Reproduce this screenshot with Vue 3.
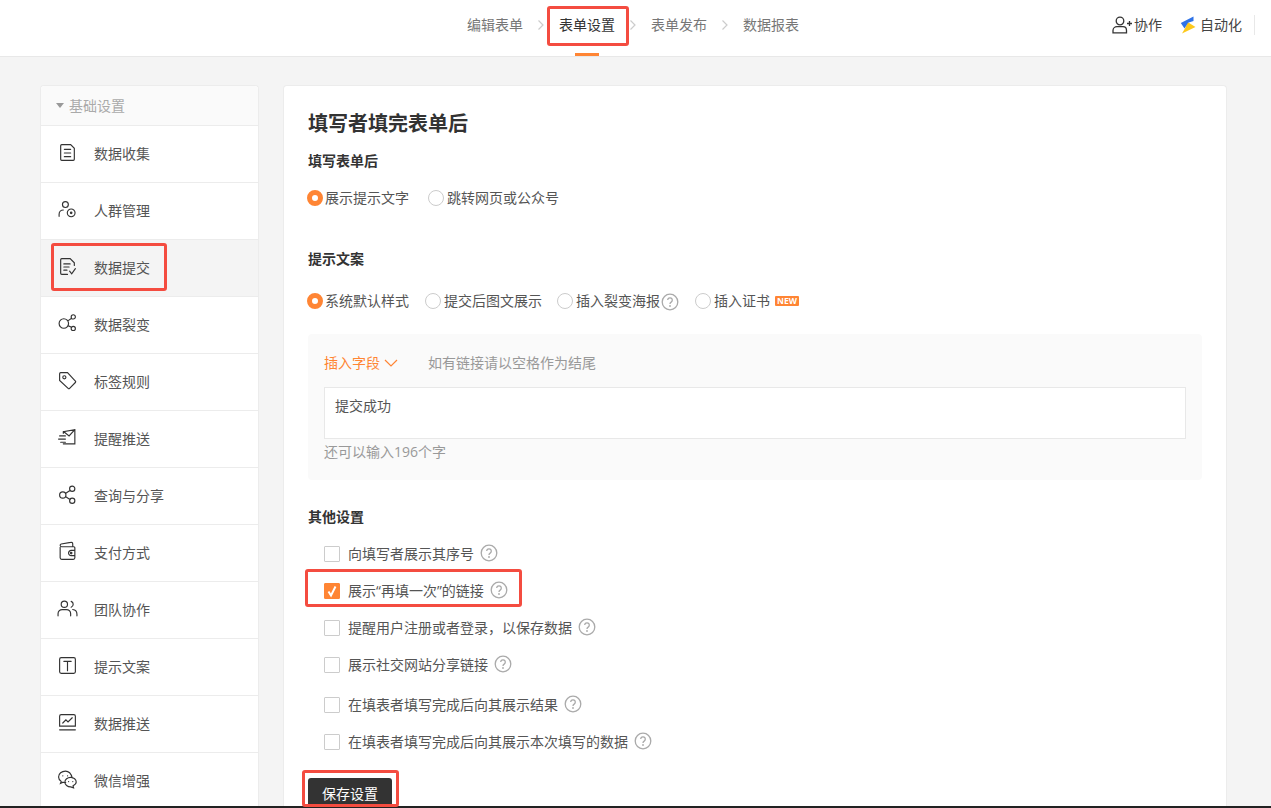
<template>
  <div class="page">
    <header class="top">
      <nav class="steps">
        <template v-for="(step, i) in steps" :key="step">
          <span class="step" :class="{ on: i === 1 }">{{ step }}</span>
          <svg v-if="i < steps.length - 1" class="arrow" viewBox="0 0 8 12"><path d="M1.500 1.500 6 6l-4.500 4.500" /></svg>
        </template>
      </nav>
      <div class="tools">
        <span class="tool">
          <svg class="add-user" viewBox="0 0 20 18"><path d="M8 1.200a3.800 3.800 0 1 1 0 7.600 3.800 3.800 0 0 1 0-7.600ZM1 16.800v-2.300c0-2.400 2-3.800 4-3.800h6c2 0 3.500 1.400 3.500 3.800v2.300ZM15 7.500h5M17.500 5v5" /></svg>
          协作
        </span>
        <span class="tool">
          <svg class="bolt" viewBox="0 0 16 18"><path fill="#fdc91c" d="M7.500 6 15.500 11 2 17.500 5.500 11.500Z" /><path fill="#2f73e8" d="M13.500.5.800 7 4.500 12.500 8 6.800 13.500 5Z" /></svg>
          自动化
        </span>
        <i class="divider"></i>
      </div>
    </header>

    <div class="body">
      <aside class="side">
        <div class="side-head"><i class="caret"></i>基础设置</div>
        <div v-for="(item, i) in menu" :key="item.name" class="side-item" :class="{ on: i === 2 }">
          <svg class="side-icon" viewBox="0 0 20 20"><path :d="item.icon" /></svg>
          {{ item.name }}
        </div>
      </aside>

      <main class="card">
        <h1>填写者填完表单后</h1>
        <h2>填写表单后</h2>
        <div class="radios first">
          <label class="radio"><i class="dot on"></i>展示提示文字</label>
          <label class="radio"><i class="dot"></i>跳转网页或公众号</label>
        </div>

        <h2 class="copy-title">提示文案</h2>
        <div class="radios second">
          <label class="radio"><i class="dot on"></i>系统默认样式</label>
          <label class="radio tuck"><i class="dot"></i>提交后图文展示</label>
          <label class="radio">
            <i class="dot"></i>插入裂变海报
            <svg class="help tight" viewBox="0 0 18 18"><use href="#help" /></svg>
          </label>
          <label class="radio"><i class="dot"></i>插入证书<b class="new">NEW</b></label>
        </div>

        <section class="copy-box">
          <div class="copy-tools">
            <span class="insert">插入字段
              <svg viewBox="0 0 14 8"><path d="m1 1 6 6 6-6" /></svg>
            </span>
            <span class="hint">如有链接请以空格作为结尾</span>
          </div>
          <div class="textarea">提交成功</div>
          <div class="count">还可以输入196个字</div>
        </section>

        <h2 class="other-title">其他设置</h2>
        <div v-for="(row, i) in options" :key="row" class="check-row" :class="{ far: i === 4 }">
          <i class="box" :class="{ on: i === 1 }">
            <svg v-if="i === 1" viewBox="0 0 14 14"><path d="m3.500 7.500 2.500 4 4.500-9" /></svg>
          </i>
          <span>{{ row }}</span>
          <svg class="help" viewBox="0 0 18 18"><use href="#help" /></svg>
        </div>

        <button class="save">保存设置</button>
      </main>
    </div>
    <div class="edge"></div>

    <!-- red annotation boxes drawn on top of the screenshot -->
    <i class="mark mark-tab"></i>
    <i class="mark mark-side"></i>
    <i class="mark mark-check"></i>
    <i class="mark mark-save"></i>

    <svg class="defs" width="0" height="0">
      <symbol id="help" viewBox="0 0 18 18">
        <circle cx="9" cy="9" r="7.800" fill="none" stroke="#aaa" stroke-width="1.300" />
        <path d="M6.700 7.100a2.300 2.300 0 1 1 3.500 2c-.8.500-1.200.9-1.200 1.900" fill="none" stroke="#aaa" stroke-width="1.300" />
        <circle cx="9" cy="13" r=".9" fill="#aaa" />
      </symbol>
    </svg>
  </div>
</template>

<script setup>
const steps = ["编辑表单", "表单设置", "表单发布", "数据报表"]

const menu = [
  { name: "数据收集", icon: "M4.500 2.500H13l3.500 3.500v10.500a1 1 0 0 1-1 1h-11a1 1 0 0 1-1-1v-13a1 1 0 0 1 1-1ZM7 7h6M7 10.500h6M7 14h6" },
  { name: "人群管理", icon: "M8 2.500a2.800 2.800 0 1 1 0 5.600 2.800 2.800 0 0 1 0-5.600ZM2 16.500v-2c0-2.200 1.800-4 4-4M13.500 9.500a3.700 3.700 0 1 1 0 7.400 3.700 3.700 0 0 1 0-7.400ZM13.500 12.500a.7.700 0 1 1 0 1.400.7.700 0 0 1 0-1.400Z" },
  { name: "数据提交", icon: "M16.500 9V6.500l-4-4h-8a1 1 0 0 0-1 1v13a1 1 0 0 0 1 1H10M6.500 7.500h6M6.500 10.500h5M6.500 13.500h3M12 14.500l2 2.500 3.500-5" },
  { name: "数据裂变", icon: "M6.500 5.500a4.500 4.500 0 1 1 0 9 4.500 4.500 0 0 1 0-9ZM15.500 1.700a2 2 0 1 1 0 4 2 2 0 0 1 0-4ZM15.500 12.700a2 2 0 1 1 0 4 2 2 0 0 1 0-4ZM10.300 7.500l3.600-2.400M10.300 12l3.600 1.500" },
  { name: "标签规则", icon: "M2.500 3.500a1 1 0 0 1 1-1h6.500l7.500 8a1 1 0 0 1 0 1.400l-5.500 5.600a1 1 0 0 1-1.400 0L2.500 10ZM7 5.500a1.500 1.500 0 1 1 0 3 1.500 1.500 0 0 1 0-3Z" },
  { name: "提醒推送", icon: "M6 6V4.500l11-2v13.500H6M6.500 4.500l5 4 5.500-6M2.500 8.500H8M1.500 11.500H8M3.500 14.500H8" },
  { name: "查询与分享", icon: "M5.500 7.500a3 3 0 1 1 0 6 3 3 0 0 1 0-6ZM14.500 2a2.500 2.500 0 1 1 0 5 2.500 2.500 0 0 1 0-5ZM14.500 13.500a2.500 2.500 0 1 1 0 5 2.500 2.500 0 0 1 0-5ZM8 9l4.700-3M8 12l4.700 3" },
  { name: "支付方式", icon: "M3 6v10a1.500 1.500 0 0 0 1.500 1.500h11a1.500 1.500 0 0 0 1.500-1.500V6.500a1 1 0 0 0-1-1H4.500A1.500 1.500 0 0 1 3 4c0-.5.500-1 1-1.200l9-1.500c1-.2 2 .2 2 1.700v2M17 9h-3.500a2.500 2.500 0 1 0 0 5H17M13.500 10.800a.7.700 0 1 1 0 1.400.7.700 0 0 1 0-1.400Z" },
  { name: "团队协作", icon: "M7 3a3 3 0 1 1 0 6 3 3 0 0 1 0-6ZM1 17v-2a4 4 0 0 1 4-4h4a4 4 0 0 1 4 4v2M13.500 3.200a3 3 0 0 1 0 5.600M15 11c2.500.3 4 2 4 4.500V17" },
  { name: "提示文案", icon: "M4 2.500h12a1.500 1.500 0 0 1 1.500 1.500v12a1.500 1.500 0 0 1-1.500 1.500H4A1.500 1.500 0 0 1 2.500 16V4A1.500 1.500 0 0 1 4 2.500ZM6.500 6h7M10 6v9" },
  { name: "数据推送", icon: "M4 2.500h12a1.500 1.500 0 0 1 1.500 1.500v9.500h-15V4A1.500 1.500 0 0 1 4 2.500ZM2.500 17h15M5.500 10.500l3-3 2 2 4-4" },
  { name: "微信增强", icon: "M8 2C4.500 2 1.500 4.500 1.500 7.500c0 1.800 1 3.200 2.500 4.300l-.7 2 2.500-1.200c.8.200 1.500.3 2.500.3M14.500 8.500C13.500 4.500 11 2 8 2M13 8c-3 0-5.500 2-5.500 4.500S10 17 13 17l2.800 1-.5-2c1.700-.8 3-2 3-3.500C18.300 10 16 8 13 8ZM5.500 6.500h.1M10 6.500h.1M11 12h.1M15 12h.1" },
]

const options = [
  "向填写者展示其序号",
  "展示“再填一次”的链接",
  "提醒用户注册或者登录，以保存数据",
  "展示社交网站分享链接",
  "在填表者填写完成后向其展示结果",
  "在填表者填写完成后向其展示本次填写的数据",
]
</script>

<style>
html, body {
  margin: 0;
  background: #f4f4f4;
}
</style>

<style scoped>
.page {
  position: relative;
  display: flex;
  flex-direction: column;
  height: 808px;
  overflow: hidden;
  background: #f4f4f4;
  color: #555;
  font: 14px/20px "Open Sans", "Noto Sans CJK SC", sans-serif;
}

i, b {
  font-style: normal;
}

.top {
  display: flex;
  align-items: center;
  flex: none;
  height: 50px;
  padding: 0 0 6px 467px;
  background: #fff;
  border-bottom: 1px solid #e8e8e8;
}

.steps {
  display: flex;
  align-items: center;
}

.step {
  position: relative;
  line-height: 50px;
  color: #777;
}

.step.on {
  color: #333;
}

.step.on::after {
  content: "";
  position: absolute;
  left: 16px;
  bottom: -6px;
  width: 24px;
  height: 3px;
  background: #ff8534;
}

.arrow {
  width: 8px;
  height: 12px;
  margin: 0 14px;
  fill: none;
  stroke: #ccc;
  stroke-width: 1.200;
}

.tools {
  display: flex;
  align-items: center;
  margin-left: auto;
  padding-right: 16px;
  color: #444;
}

.tool {
  display: flex;
  align-items: center;
  margin-left: 18px;
}

.add-user {
  width: 20px;
  height: 18px;
  margin-right: 2px;
  fill: none;
  stroke: #333;
  stroke-width: 1.300;
}

.bolt {
  width: 16px;
  height: 18px;
  margin-right: 4px;
}

.divider {
  width: 1px;
  height: 20px;
  margin-left: 12px;
  background: #e8e8e8;
}

.body {
  display: flex;
  flex: 1;
  min-height: 0;
  gap: 24px;
  padding: 28px 0 0 40px;
}

.side {
  flex: none;
  width: 217px;
  border: 1px solid #ececec;
  border-bottom: 0;
  border-radius: 4px 4px 0 0;
  background: #fff;
}

.side-head {
  display: flex;
  align-items: center;
  height: 39px;
  padding-left: 15px;
  background: #fafafa;
  border-bottom: 1px solid #ececec;
  border-radius: 4px 4px 0 0;
  color: #aaa;
}

.caret {
  width: 0;
  height: 0;
  margin-right: 5px;
  border: 4px solid transparent;
  border-top: 5px solid #999;
  border-bottom: 0;
}

.side-item {
  display: flex;
  align-items: center;
  height: 56px;
  padding-left: 16px;
  border-bottom: 1px solid #ececec;
}

.side-item.on {
  background: #f4f4f4;
}

.side-icon {
  width: 21px;
  height: 21px;
  margin-right: 16px;
  margin-top: -3px;
  fill: none;
  stroke: #333;
  stroke-width: 1.100;
  stroke-linecap: round;
}

.card {
  flex: none;
  width: 894px;
  padding: 24px 24px 0;
  border: 1px solid #ececec;
  border-bottom: 0;
  border-radius: 4px 4px 0 0;
  background: #fff;
}

h1 {
  margin: 0;
  font-size: 20px;
  line-height: 28px;
  font-weight: 700;
  color: #333;
}

h2 {
  margin: 13px 0 0;
  font-size: 14px;
  line-height: 20px;
  font-weight: 700;
  color: #333;
}

.radios {
  display: flex;
  align-items: center;
  margin-left: -1px;
}

.radios.first {
  margin-top: 17px;
  gap: 19px;
}

.radios.second {
  margin-top: 21px;
  gap: 16px;
}

.radio {
  display: flex;
  align-items: center;
}

.radio.tuck {
  margin-right: -1px;
}

.dot {
  box-sizing: border-box;
  width: 16px;
  height: 16px;
  margin-right: 3px;
  border: 1px solid #ccc;
  border-radius: 50%;
  background: #fff;
}

.dot.on {
  margin-right: 2px;
  border: 5px solid #ff8534;
}

.copy-title {
  margin-top: 41px;
}

.help {
  flex: none;
  width: 18px;
  height: 18px;
  margin-left: 6px;
  margin-top: -2px;
}

.help.tight {
  margin-left: 1px;
  margin-top: 3px;
}

.new {
  margin: 1px 0 0 5px;
  padding: 0 2px;
  font: 700 8.500px/10px "Open Sans", sans-serif;
  color: #fff;
  background: #ff8534;
  border-radius: 1px;
}

.copy-box {
  box-sizing: border-box;
  height: 146px;
  margin-top: 23px;
  padding: 19px 16px 0;
  background: #fafafa;
  border-radius: 4px;
}

.copy-tools {
  display: flex;
  align-items: center;
}

.insert {
  display: flex;
  align-items: center;
  width: 104px;
  color: #ff8534;
}

.insert svg {
  width: 14px;
  height: 8px;
  margin-left: 4px;
  fill: none;
  stroke: #ff8534;
  stroke-width: 1.200;
}

.hint {
  color: #999;
}

.textarea {
  box-sizing: border-box;
  height: 52px;
  margin-top: 14px;
  padding: 8px 10px;
  border: 1px solid #e8e8e8;
  background: #fff;
}

.count {
  margin-top: 3px;
  color: #999;
}

.other-title {
  margin-top: 27px;
  margin-bottom: 8px;
}

.check-row {
  display: flex;
  align-items: center;
  height: 37px;
  padding-left: 16px;
}

.check-row.far {
  margin-top: 3px;
}

.box {
  box-sizing: border-box;
  display: block;
  flex: none;
  width: 16px;
  height: 16px;
  margin-right: 8px;
  border: 1px solid #ccc;
  border-radius: 1px;
  background: #fff;
}

.box.on {
  border-color: #ff8534;
  background: #ff8534;
}

.box svg {
  display: block;
  width: 14px;
  height: 14px;
  fill: none;
  stroke: #fff;
  stroke-width: 2;
}

.save {
  display: block;
  width: 84px;
  height: 32px;
  margin-top: 18px;
  border: 0;
  border-radius: 3px;
  background: #333;
  color: #fff;
  font: inherit;
  padding: 0;
}

.edge {
  flex: none;
  height: 2px;
  background: #222;
  position: relative;
}

.mark {
  position: absolute;
  box-sizing: border-box;
  border: 3px solid #f44c40;
  border-radius: 3px;
}

.mark-tab {
  left: 547px;
  top: 6px;
  width: 82px;
  height: 40px;
}

.mark-side {
  left: 51px;
  top: 243px;
  width: 116px;
  height: 48px;
}

.mark-check {
  left: 305px;
  top: 569px;
  width: 217px;
  height: 38px;
}

.mark-save {
  left: 302px;
  top: 770px;
  width: 97px;
  height: 37px;
}

.defs {
  position: absolute;
}
</style>
